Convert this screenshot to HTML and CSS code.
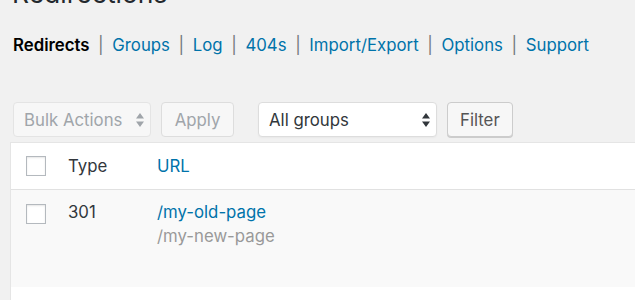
FILE: index.html
```html
<!DOCTYPE html>
<html lang="en">
<head>
    <meta charset="UTF-8">
    <title>Redirections</title>
    <link rel="stylesheet" href="styles.css">
</head>
<body>
    <div class="wrap">
        <h1 class="page-title">Redirections</h1>

        <ul class="subsubsub">
            <li><a class="current" href="#">Redirects</a><span class="sep">|</span></li>
            <li><a href="#">Groups</a><span class="sep">|</span></li>
            <li><a href="#">Log</a><span class="sep">|</span></li>
            <li><a href="#">404s</a><span class="sep">|</span></li>
            <li><a href="#">Import/Export</a><span class="sep">|</span></li>
            <li><a href="#">Options</a><span class="sep">|</span></li>
            <li><a href="#">Support</a></li>
        </ul>

        <div class="tablenav">
            <div class="select select-bulk disabled">
                <span>Bulk Actions</span>
                <svg class="arrows" width="8" height="14" viewBox="0 0 8 14"><path d="M4 0 L8 5.5 L0 5.5 Z M0 8.5 L8 8.5 L4 14 Z"/></svg>
            </div>
            <button class="button disabled">Apply</button>

            <div class="select select-group">
                <span>All groups</span>
                <svg class="arrows" width="8" height="14" viewBox="0 0 8 14"><path d="M4 0 L8 5.5 L0 5.5 Z M0 8.5 L8 8.5 L4 14 Z"/></svg>
            </div>
            <button class="button">Filter</button>
        </div>

        <div class="list-table">
            <div class="row head">
                <div class="cell cb"><span class="checkbox"></span></div>
                <div class="cell">Type</div>
                <div class="cell"><a href="#">URL</a></div>
            </div>
            <div class="row item alternate">
                <div class="cell cb"><span class="checkbox"></span></div>
                <div class="cell">301</div>
                <div class="cell">
                    <a href="#">/my-old-page</a>
                    <div class="target">/my-new-page</div>
                </div>
            </div>
            <div class="row item">
                <div class="cell cb"></div>
                <div class="cell"></div>
                <div class="cell"></div>
            </div>
        </div>
    </div>
</body>
</html>
```

FILE: styles.css
```css
* {
    margin: 0;
    padding: 0;
    box-sizing: border-box;
}

html, body {
    overflow: hidden;
}

body {
    background: #f1f1f1;
    color: #32373c;
    font-family: Inter, 'Liberation Sans', sans-serif;
    font-size: 16.8px;
}

a {
    color: #0073aa;
    text-decoration: none;
}

.wrap {
    padding-left: 10px;
    margin-right: -30px;
}

.page-title {
    font-size: 26.5px;
    font-weight: 400;
    line-height: 37px;
    margin-top: -25px;
    padding-left: 2px;
    color: #23282d;
}

.subsubsub {
    list-style: none;
    display: flex;
    margin-top: 17px;
    padding-left: 3px;
    line-height: 32px;
}

.subsubsub .current {
    color: #000;
    font-weight: 600;
}

.subsubsub .sep {
    color: #72777c;
    margin: 0 8.6px;
}

.tablenav {
    display: flex;
    align-items: center;
    margin-top: 41px;
    padding-left: 3px;
    height: 35px;
}

.select {
    height: 35px;
    border: 1px solid #ddd;
    border-radius: 4px;
    background: #fff;
    display: flex;
    align-items: center;
    justify-content: space-between;
    padding: 0 6px 0 10px;
    color: #32373c;
    box-shadow: 0 1px 2px rgba(0,0,0,0.04);
}

.select .arrows {
    fill: #32373c;
}

.select-bulk {
    width: 138px;
}

.select-group {
    width: 179px;
    margin-left: 24px;
}

.select.disabled {
    background: #f7f7f7;
    border-color: #e4e4e4;
    color: #a0a5aa;
    box-shadow: none;
}

.select.disabled .arrows {
    fill: #a0a5aa;
}

.button {
    height: 35px;
    margin-left: 10px;
    padding: 0 12px;
    border: 1px solid #ccc;
    border-radius: 4px;
    background: #f7f7f7;
    color: #555;
    font-family: inherit;
    font-size: 16.8px;
    box-shadow: 0 1px 0 #ccc;
}

.button.disabled {
    width: 73px;
    color: #a0a5aa;
    border-color: #ddd;
    box-shadow: none;
}

.list-table {
    margin-top: 5px;
    border: 1px solid #e5e5e5;
    background: #fff;
}

.row {
    display: grid;
    grid-template-columns: 57px 89px 1fr;
}

.row.head {
    height: 47px;
    align-items: center;
    border-bottom: 1px solid #e1e1e1;
}

.row.item {
    height: 97px;
    padding-top: 10px;
    line-height: 24px;
}

.row.alternate {
    background: #f9f9f9;
}

.cell.cb {
    padding-left: 15px;
}

.checkbox {
    display: block;
    width: 20px;
    height: 20px;
    border: 1px solid #b4b9be;
    background: #fff;
    box-shadow: inset 0 1px 2px rgba(0,0,0,0.1);
}

.row.item .checkbox {
    margin-top: 4px;
}

.target {
    color: #999;
}
```
